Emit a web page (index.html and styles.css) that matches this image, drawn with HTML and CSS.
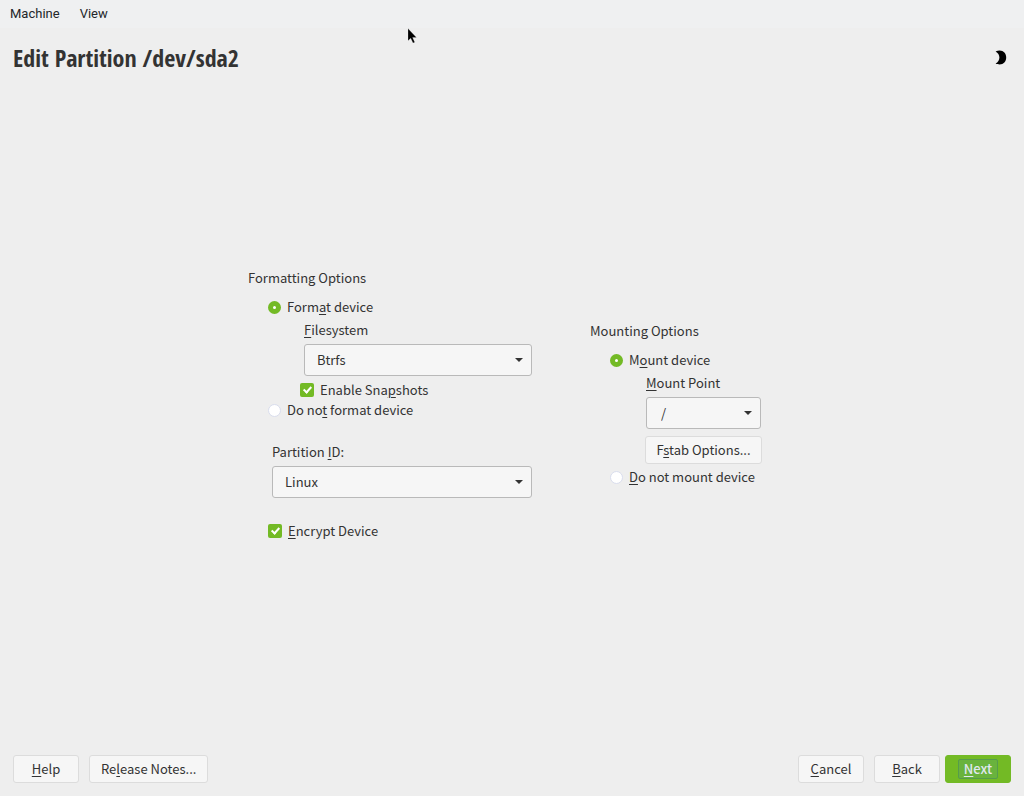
FILE: index.html
```html
<!DOCTYPE html>
<html lang="en">
<head>
    <meta charset="UTF-8">
    <meta name="viewport" content="width=device-width, initial-scale=1.0">
    <title>Edit Partition /dev/sda2</title>
    <link rel="stylesheet" href="styles.css">
</head>
<body>
    <nav class="menu-bar">
        <a href="#">Machine</a>
        <a href="#">View</a>
    </nav>

    <header class="header">
        <h1>Edit Partition /dev/sda2</h1>
        <button type="button" class="theme-toggle" aria-label="Toggle theme">
            <svg width="14" height="16" viewBox="0 0 14 16">
                <path d="M2.6 1.4C4 .7 5.4.5 6.6.5c4 0 6.6 3 6.6 7s-2.6 7-6.6 7c-1.2 0-2.6-.2-4-.9 2.4-1.3 3.8-3.5 3.8-6.1S5 2.7 2.6 1.4z"/>
            </svg>
        </button>
    </header>

    <main class="content">
        <section class="options formatting">
            <h2>Formatting Options</h2>
            <label class="choice"><input type="radio" name="format" checked><span>Form<u>a</u>t device</span></label>
            <div class="nested">
                <label for="filesystem"><u>F</u>ilesystem</label>
                <div class="select-box">
                    <select id="filesystem">
                        <option>Btrfs</option>
                        <option>Ext4</option>
                        <option>XFS</option>
                    </select>
                </div>
            </div>
            <label class="choice snapshots"><input type="checkbox" checked><span>Enable Sna<u>p</u>shots</span></label>
            <label class="choice"><input type="radio" name="format"><span>Do no<u>t</u> format device</span></label>
            <div class="partition-id">
                <label for="partition-id">Partition <u>I</u>D:</label>
                <div class="select-box">
                    <select id="partition-id">
                        <option>Linux</option>
                        <option>Linux Swap</option>
                    </select>
                </div>
            </div>
            <label class="choice"><input type="checkbox" checked><span><u>E</u>ncrypt Device</span></label>
        </section>

        <section class="options mounting">
            <h2>Mounting Options</h2>
            <label class="choice"><input type="radio" name="mount" checked><span>M<u>o</u>unt device</span></label>
            <div class="nested">
                <label for="mount-point"><u>M</u>ount Point</label>
                <div class="select-box">
                    <select id="mount-point" class="editable">
                        <option>/</option>
                        <option>/home</option>
                    </select>
                </div>
            </div>
            <button type="button" class="btn fstab">F<u>s</u>tab Options...</button>
            <label class="choice"><input type="radio" name="mount"><span><u>D</u>o not mount device</span></label>
        </section>
    </main>

    <footer class="footer">
        <button type="button" class="btn"><u>H</u>elp</button>
        <button type="button" class="btn">Re<u>l</u>ease Notes...</button>
        <div class="footer-right">
            <button type="button" class="btn"><u>C</u>ancel</button>
            <button type="button" class="btn"><u>B</u>ack</button>
            <button type="button" class="btn primary"><span><u>N</u>ext</span></button>
        </div>
    </footer>

    <svg class="cursor" width="10" height="17" viewBox="0 0 10 17">
        <path d="M1 .6v12.2l2.7-2.6 2.3 4.9 1.8-.8-2.2-4.7h3.9z" fill="#000" stroke="#fff" stroke-width=".2"/>
    </svg>
</body>
</html>
```
FILE: styles.css
```css
* {
    margin: 0;
    padding: 0;
    box-sizing: border-box;
}

body {
    display: flex;
    flex-direction: column;
    min-height: 100vh;
    background: #eee;
    color: #333;
    font-family: "Noto Sans CJK SC", sans-serif;
    font-size: 13px;
    line-height: 20px;
}

u {
    text-decoration-thickness: 1px;
    text-underline-offset: 2px;
}

.menu-bar {
    display: flex;
    gap: 20px;
    padding: 4px 10px;
    background: #eff0f1;
    font-family: Roboto, sans-serif;
}

.menu-bar a {
    color: #232629;
    text-decoration: none;
}

.header {
    display: flex;
    justify-content: space-between;
    align-items: center;
    padding: 12px 17px 12px 13px;
}

h1 {
    font-family: "Open Sans Condensed", "Noto Sans Condensed", "Open Sans", sans-serif;
    font-size: 24px;
    font-weight: 700;
    line-height: 36px;
}

.theme-toggle {
    display: flex;
    border: none;
    background: none;
}

.content {
    flex: 1;
    display: flex;
    justify-content: center;
    align-items: center;
    gap: 58px;
    padding: 0 14px 34px 0;
}

.options {
    display: flex;
    flex-direction: column;
}

.formatting {
    width: 284px;
}

.mounting {
    width: 172px;
    padding-bottom: 1px;
}

h2 {
    font-size: 13px;
    font-weight: 400;
    margin-bottom: 9px;
}

.choice {
    display: flex;
    align-items: center;
    gap: 6px;
    margin-left: 20px;
}

input[type="radio"],
input[type="checkbox"] {
    appearance: none;
    flex: none;
    width: 13px;
    height: 13px;
    border: 1px solid #d9dded;
    border-radius: 50%;
    background: #fff;
}

input[type="radio"]:checked {
    border: 5px solid #73ba25;
}

input[type="checkbox"] {
    display: flex;
    justify-content: center;
    width: 14px;
    height: 14px;
    border-radius: 2px;
}

input[type="checkbox"]:checked {
    border: none;
    background: #73ba25;
}

input[type="checkbox"]:checked::after {
    content: "";
    width: 3px;
    height: 6px;
    margin-top: 2px;
    border: solid #fff;
    border-width: 0 2px 2px 0;
    transform: rotate(42deg);
}

.nested {
    margin: 3px 0 4px 56px;
}

.nested label,
.partition-id label {
    display: block;
    margin-bottom: 4px;
}

.snapshots {
    margin-left: 52px;
}

.partition-id {
    margin: 22px 0 23px 24px;
}

.select-box {
    position: relative;
}

.select-box::after {
    content: "";
    position: absolute;
    top: 14px;
    right: 9px;
    border: 4px solid transparent;
    border-top-color: #333;
    border-bottom: none;
    pointer-events: none;
}

select {
    appearance: none;
    display: block;
    width: 100%;
    height: 32px;
    padding: 0 24px 0 12px;
    border: 1px solid #b9b9b9;
    border-radius: 3px;
    background: #f6f6f6;
    color: #333;
    font: inherit;
}

select.editable {
    padding-left: 14px;
}

.mounting .nested {
    margin-right: 1px;
    margin-bottom: 7px;
}

.btn {
    min-width: 66px;
    height: 28px;
    padding: 0 11px;
    border: 1px solid #dcdcdc;
    border-radius: 3px;
    background: #f6f6f6;
    color: #333;
    font: inherit;
    white-space: nowrap;
}

.fstab {
    margin: 0 0 3px 55px;
    padding: 0;
}

.footer {
    display: flex;
    gap: 10px;
    padding: 0 13px 13px;
}

.footer-right {
    display: flex;
    gap: 10px;
    margin-left: auto;
}

.primary {
    margin-left: -5px;
    padding: 0;
    border-color: #73ba25;
    background: #73ba25;
    color: #e0e8f0;
    font-weight: 500;
}

.primary span {
    display: inline-block;
    padding: 0 5px;
    border: 1px solid #569c4c;
    border-radius: 2px;
    background: #69b33d;
    line-height: 18px;
}

/* mouse pointer drawn over the window */
.cursor {
    position: absolute;
    top: 28px;
    left: 407px;
}
```
